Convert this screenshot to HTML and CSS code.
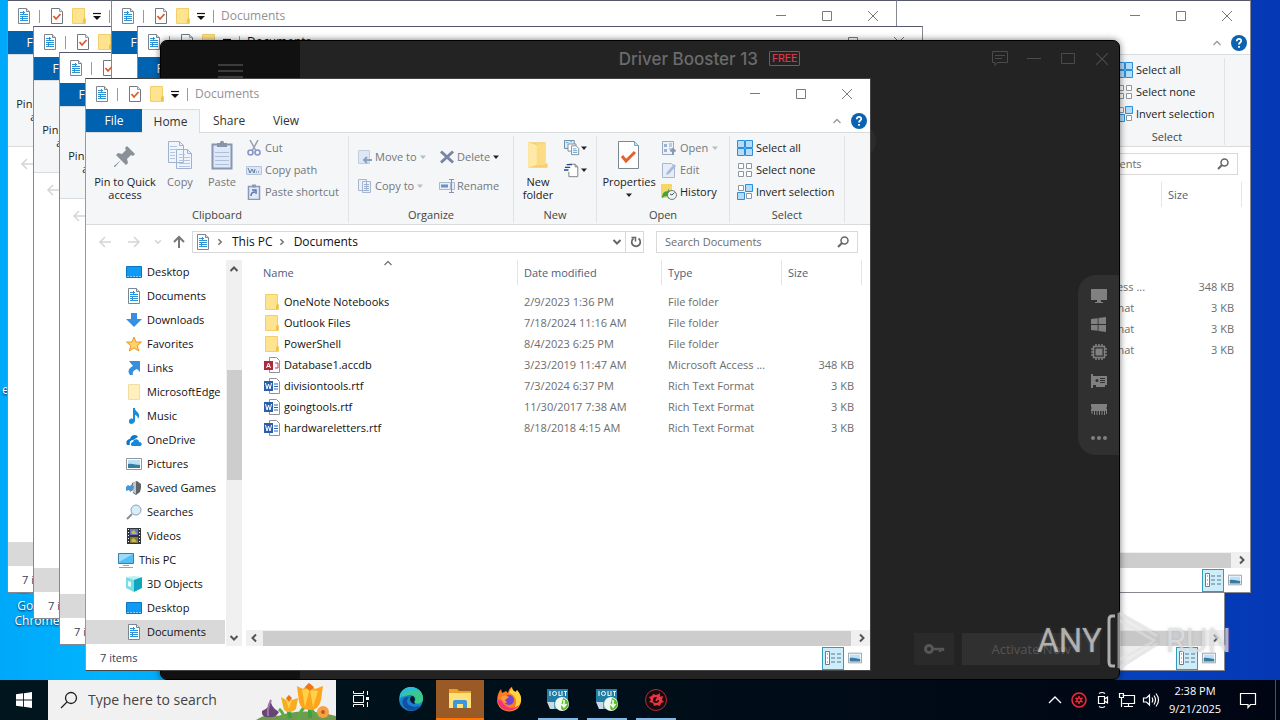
FILE: index.html
```html
<!DOCTYPE html>
<html lang="en">
<head>
<meta charset="utf-8">
<title>Desktop</title>
<link rel="stylesheet" href="styles.css">
</head>
<body>
<svg class="sprite" aria-hidden="true">
  <symbol id="doc" viewBox="0 0 16 16"><path d="M2.500.500h8l3 3v12h-11z" fill="#fff" stroke="#7d8690"/><path d="M10.500.500v3h3" fill="#dde" stroke="#7d8690"/><path d="M4 4.500h5M4 6.500h8M4 8.500h8M4 10.500h8M4 12.500h8" stroke="#2b93d6"/><path d="M7.500 3v4M6.500 9v4" stroke="#2b93d6"/></symbol>
  <symbol id="check" viewBox="0 0 16 16"><path d="M2.500.500h8l3 3v12h-11z" fill="#fff" stroke="#6f7780"/><path d="M10.500.500v3h3" fill="#d6e8f5" stroke="#7aa7c7"/><path d="M4.500 8l2.500 3 4.500-5" fill="none" stroke="#e0572b" stroke-width="1.800"/></symbol>
  <symbol id="folder" viewBox="0 0 16 16"><path d="M1.500.500h12v10h1v5h-13z" fill="#ffe48f" stroke="#f3cf6c"/><path d="M12 15v-3l1-2h1v5z" fill="#ecc14e"/></symbol>
  <symbol id="paleFolder" viewBox="0 0 16 16"><path d="M2.500.500h11v15h-11z" fill="#fff0bd" stroke="#f0dda0"/></symbol>
  <symbol id="custom" viewBox="0 0 10 10"><path d="M1 2.500h8" stroke="#111" stroke-width="1.200"/><path d="M1 5h8L5 9z" fill="#111"/></symbol>
  <symbol id="min" viewBox="0 0 12 12"><path d="M1 5.500h10" stroke="currentColor"/></symbol>
  <symbol id="max" viewBox="0 0 12 12"><path d="M1.500 1.500h9v9h-9z" fill="none" stroke="currentColor"/></symbol>
  <symbol id="close" viewBox="0 0 12 12"><path d="M1 1l10 10M11 1L1 11" stroke="currentColor"/></symbol>
  <symbol id="up" viewBox="0 0 10 10"><path d="M1.500 7L5 3.500 8.500 7" fill="none" stroke="currentColor" stroke-width="1.300"/></symbol>
  <symbol id="upBold" viewBox="0 0 10 10"><path d="M1.500 7L5 3.500 8.500 7" fill="none" stroke="currentColor" stroke-width="2"/></symbol>
  <symbol id="down" viewBox="0 0 10 10"><path d="M1.500 3L5 6.500 8.500 3" fill="none" stroke="currentColor" stroke-width="2"/></symbol>
  <symbol id="left" viewBox="0 0 10 10"><path d="M7 1.500L3.500 5 7 8.500" fill="none" stroke="currentColor" stroke-width="2"/></symbol>
  <symbol id="right" viewBox="0 0 10 10"><path d="M3 1.500L6.500 5 3 8.500" fill="none" stroke="currentColor" stroke-width="2"/></symbol>
  <symbol id="caret" viewBox="0 0 8 8"><path d="M1 2.500h6L4 6z" fill="currentColor"/></symbol>
  <symbol id="back" viewBox="0 0 14 14"><path d="M13 7H2M7 2L2 7l5 5" fill="none" stroke="currentColor" stroke-width="1.500"/></symbol>
  <symbol id="forward" viewBox="0 0 14 14"><path d="M1 7h11M7 2l5 5-5 5" fill="none" stroke="currentColor" stroke-width="1.500"/></symbol>
  <symbol id="parent" viewBox="0 0 14 14"><path d="M7 13V2M2 7l5-5 5 5" fill="none" stroke="currentColor" stroke-width="2"/></symbol>
  <symbol id="help" viewBox="0 0 16 16"><circle cx="8" cy="8" r="8" fill="#0b62b0"/><path d="M5.800 6.200C5.800 3 10.400 3.300 10.200 6c-.1 1.500-2.200 1.600-2.200 3.500M8 11v1.800" fill="none" stroke="#fff" stroke-width="1.800"/></symbol>
  <symbol id="pin" viewBox="0 0 24 24"><path d="M14 2l8 8-2 2-2-1-4 4 1 4-2 2-5-5-6 7-1 0 0-1 7-6-5-5 2-2 4 1 4-4-1-2z" fill="#8a9097"/></symbol>
  <symbol id="copy" viewBox="0 0 26 30"><path d="M1.500 1.500h11l4 4v17h-15zM9.500 9.500h11l4 4v15h-15z" fill="#f0f4fb" stroke="#9fb2d2"/><path d="M12.500 1.500v4h4M20.500 9.500v4h4" fill="none" stroke="#9fb2d2"/><path d="M3 6.500h7M3 9.500h6M3 12.500h5M3 15.500h5M3 18.500h5M12 14.500h6M12 17.500h11M12 20.500h11M12 23.500h11M12 26.500h11" stroke="#b3c5e3"/></symbol>
  <symbol id="paste" viewBox="0 0 24 30"><path d="M2.500 4.500h19v24h-19z" fill="#dfe8f6" stroke="#8796b3" stroke-width="2"/><path d="M7 3h3c0-3 4-3 4 0h3v4H7z" fill="#8a94a8"/><path d="M5 12.500h14M5 16.500h14M5 20.500h14M5 24.500h14" stroke="#aebfdc"/></symbol>
  <symbol id="cut" viewBox="0 0 16 16"><path d="M4 0l6 11M12 0L6 11" stroke="#94a0b4" stroke-width="1.500"/><circle cx="4.500" cy="12.500" r="2.500" fill="none" stroke="#8595c7" stroke-width="1.600"/><circle cx="11.500" cy="12.500" r="2.500" fill="none" stroke="#8595c7" stroke-width="1.600"/></symbol>
  <symbol id="path" viewBox="0 0 16 16"><path d="M.500 4.500h15v8H.500z" fill="#dbe6f5" stroke="#b7c5dc"/><path d="M2 6l2 5 2-4 2 4 1-4M10 10h1M12 10h1" fill="none" stroke="#62789d"/></symbol>
  <symbol id="shortcut" viewBox="0 0 16 16"><path d="M2.500 2.500h11v13h-11z" fill="#e1eafa" stroke="#8a99b8" stroke-width="1.500"/><path d="M6 .500h4v3H6z" fill="#8a99b8"/><path d="M5 12c0-3 1-4 4-4M6 6h4v4" fill="none" stroke="#5877a8" stroke-width="1.500"/></symbol>
  <symbol id="moveTo" viewBox="0 0 16 16"><path d="M1.500 1.500h11v13h-11z" fill="#dfe7f4" stroke="#c0cce0"/><path d="M15 11H7M10 8l-3 3 3 3" fill="none" stroke="#8ba2c7" stroke-width="2"/></symbol>
  <symbol id="copyTo" viewBox="0 0 16 16"><path d="M1.500 1.500h8v11h-8zM5.500 3.500h8v11h-8z" fill="#ecf1f9" stroke="#a7b7d0"/><path d="M7 6.500h5M7 8.500h5M7 10.500h5M7 12.500h5" stroke="#9db0d0"/></symbol>
  <symbol id="delete" viewBox="0 0 16 16"><path d="M2 2.500l12 11M14 2.500l-12 11" stroke="#7586a6" stroke-width="3"/></symbol>
  <symbol id="rename" viewBox="0 0 16 16"><path d="M.500 4.500h11v7H.500zM12 4.500h3.500v7H12" fill="#e8eff9" stroke="#a9b9d3"/><path d="M2 8h7" stroke="#6f8fc2" stroke-width="3"/><path d="M10 1.500h5M12.500 1.500v13M10 14.500h5" stroke="#8493ac"/></symbol>
  <symbol id="bigFolder" viewBox="0 0 22 28"><path d="M2 2h16v20h2v4H2z" fill="#f4cf6a"/><path d="M2 2l8 3v18l-8 3z" fill="#ffe9a6"/><path d="M10 3h8v20l-8 1z" fill="#fbdc85"/></symbol>
  <symbol id="newItem" viewBox="0 0 18 18"><path d="M.500.500h11v9H.500z" fill="#d9effb" stroke="#557e9b"/><path d="M4.500 4.500h9v8h-9z" fill="#fff" stroke="#7b8792"/><path d="M8.500 6.500h5l3 3v7h-8z" fill="#fff" stroke="#7b8792"/><path d="M2 3h3M7 2h2M10 10h4M10 12h5M10 14h5" stroke="#58a4cf"/></symbol>
  <symbol id="easy" viewBox="0 0 18 18"><path d="M5.500 2.500h7l3 3v11h-10V11" fill="#fff" stroke="#6f7780"/><path d="M12.500 2.500v3h3" fill="none" stroke="#6f7780"/><path d="M3 3h6M1 6h6M0 9h5" stroke="#1d4f8b" stroke-width="1.500"/></symbol>
  <symbol id="props" viewBox="0 0 24 30"><path d="M1.500 1.500h16l4 4v23h-20z" fill="#fff" stroke="#7b8792"/><path d="M17.500 1.500v4h4" fill="#bfe3fa" stroke="#67a8d2"/><path d="M5 16l4 5 9-9" fill="none" stroke="#e4602f" stroke-width="3"/></symbol>
  <symbol id="open" viewBox="0 0 16 16"><path d="M1.500 1.500h11v13h-11z" fill="#eff3f9" stroke="#9baabf"/><path d="M3 4h3v3H3zM3 9h3v3H3z" fill="#9db1d0"/><path d="M8 4h3M8 6h3M8 9h3" stroke="#8da1c2"/><path d="M12 15V9M9.500 11.500L12 9l2.500 2.500" fill="none" stroke="#8a98b1" stroke-width="2"/></symbol>
  <symbol id="edit" viewBox="0 0 16 16"><path d="M1.500 1.500h9l3 3v11h-12z" fill="#e6edf8" stroke="#a8b7ce"/><path d="M5 13l1-3 7-8 2 2-7 8z" fill="#aabbd6"/></symbol>
  <symbol id="history" viewBox="0 0 16 16"><path d="M0 0h11v14H0z" fill="#f8d568"/><path d="M1 14q0-7 6-7V5l5 5-5 5v-3q-4 0-6 2z" fill="#39a53f"/><circle cx="11" cy="11" r="4.500" fill="#eef2f2" stroke="#707b7d"/><path d="M11 11l2.500-2.500M11 11l-2-1" fill="none" stroke="#4b5557"/></symbol>
  <symbol id="selAll" viewBox="0 0 16 16"><path d="M.500.500h7v7h-7zM8.500.500h7v7h-7zM.500 8.500h7v7h-7zM8.500 8.500h7v7h-7z" fill="#b5dcf8" stroke="#2b8fdc"/></symbol>
  <symbol id="selNone" viewBox="0 0 16 16"><path d="M1.500 1.500h5v5h-5zM9.500 1.500h5v5h-5zM1.500 9.500h5v5h-5zM9.500 9.500h5v5h-5z" fill="#fff" stroke="#8f979e"/></symbol>
  <symbol id="selInv" viewBox="0 0 16 16"><path d="M1.500 1.500h5v5h-5zM9.500 9.500h5v5h-5z" fill="#fff" stroke="#8f979e"/><path d="M8.500.500h7v7h-7zM.500 8.500h7v7h-7z" fill="#b5dcf8" stroke="#2b8fdc"/></symbol>
  <symbol id="refresh" viewBox="0 0 14 14"><path d="M9.500 3.500a4.300 4.300 0 1 1-5 0" fill="none" stroke="currentColor" stroke-width="1.700"/><path d="M2.500 2.500h4v4" fill="none" stroke="currentColor" stroke-width="1.500"/></symbol>
  <symbol id="lens" viewBox="0 0 14 14"><circle cx="8.500" cy="5.500" r="3.500" fill="none" stroke="currentColor" stroke-width="1.500"/><path d="M6 8l-4 4" stroke="currentColor" stroke-width="2"/></symbol>
  <symbol id="desktop" viewBox="0 0 16 16"><path d="M.500 2.500h15v11H.500z" fill="#109af2" stroke="#0877c8"/><path d="M1 12.500h14" stroke="#7fcaff" stroke-dasharray="2 1"/></symbol>
  <symbol id="downloads" viewBox="0 0 16 16"><path d="M5 1h6v6h5l-8 8-8-8h5z" fill="#3590e4"/></symbol>
  <symbol id="star" viewBox="0 0 16 16"><path d="M8 1l2 5h5.500l-4.300 3.500 1.600 5.500L8 12l-4.800 3 1.600-5.500L.500 6H6z" fill="#ffd267" stroke="#ea962e"/></symbol>
  <symbol id="links" viewBox="0 0 16 16"><path d="M3 1h11v11l-3-3c-3 1-5 3-4 6H4c-3-4-1-7 3-9z" fill="#378fdb"/></symbol>
  <symbol id="music" viewBox="0 0 16 16"><path d="M7 0h2c0 4 5 4 4 9l-1 2c0-3-2-4-3-4v6c-1 4-7 4-6 0 0-2 2-3 4-2z" fill="#168edc"/></symbol>
  <symbol id="cloud" viewBox="0 0 16 16"><path d="M1 13c-2-4 1-6 3-6 1-5 7-5 8-2L7 8c-3 0-4 3-3 5z" fill="#0b78cf"/><path d="M6 14c-2-1-1-4 1-4 1-4 6-3 6 0 4 0 3 4 1 4z" fill="#1687df"/></symbol>
  <symbol id="pictures" viewBox="0 0 16 16"><path d="M.500 2.500h15v11H.500z" fill="#fff" stroke="#8f989f"/><path d="M2 4h12v8H2z" fill="#bce0f6"/><path d="M2 8c4-1 8 1 12 1v3H2z" fill="#377ca1"/></symbol>
  <symbol id="games" viewBox="0 0 16 16"><path d="M6 3l5-2 4 3v4l-1 4-4 3-3-2z" fill="#5f6368"/><path d="M7 3l3-2v13l-3-2z" fill="#c3c6c8"/><path d="M0 7l2-2 2 1 2-2 2 3-1 3-3 2-1-2-3 1z" fill="#4795d2"/></symbol>
  <symbol id="searches" viewBox="0 0 16 16"><circle cx="10" cy="6" r="5" fill="#d7edfa" stroke="#8ea2b3"/><path d="M6 10l-5 5" stroke="#8a8f94" stroke-width="2"/></symbol>
  <symbol id="videos" viewBox="0 0 16 16"><path d="M1 0h14v16H1z" fill="#30363c"/><path d="M4 1h8v6H4z" fill="#6679ba"/><path d="M4 9h8v6H4z" fill="#83793e"/><path d="M5 4l3-2 3 4H6M5 12l3-2 3 4H6" fill="#d2b73e"/><path d="M2.500 1v15M13.500 1v15" stroke="#fff" stroke-dasharray="1 2"/></symbol>
  <symbol id="pc" viewBox="0 0 16 16"><path d="M.500 1.500h15v10H.500z" fill="#54bdf2" stroke="#397fa8"/><path d="M1 2h14L1 10z" fill="#9bdcfa"/><path d="M5 13.500h6M1 15.500h14" stroke="#93a4ae"/></symbol>
  <symbol id="objects" viewBox="0 0 16 16"><path d="M8 3L0 1v11l8 4z" fill="#7adde4"/><path d="M8 3l8-2v11l-8 4z" fill="#10a4bd"/><path d="M0 1l8-1 8 1-8 3z" fill="#bdf2f3"/><path d="M2 5l3 1v5l-3-1z" fill="#e8ffff"/></symbol>
  <symbol id="access" viewBox="0 0 16 16"><path d="M5.500.500h7l3 3v12h-10z" fill="#fff" stroke="#8e9499"/><path d="M11 6h3v5h-3" fill="none" stroke="#c43b51"/><path d="M0 4h9v9H0z" fill="#b1283e"/><path d="M2.500 11l2-5 2 5M3 9.500h3" fill="none" stroke="#fff"/></symbol>
  <symbol id="word" viewBox="0 0 16 16"><path d="M5.500.500h7l3 3v12h-10z" fill="#fff" stroke="#8e9499"/><path d="M10 6h4M10 8.500h4M10 11h4" stroke="#2b66b4"/><path d="M0 3h9v10H0z" fill="#2a5faa"/><path d="M1.500 5l1.500 6 1.500-5L6 11l1.500-6" fill="none" stroke="#fff"/></symbol>
  <symbol id="details" viewBox="0 0 18 16"><path d="M1.500 1.500h4v13h-4z" fill="#fff" stroke="#817474"/><path d="M3 4h1M3 8h1M3 12h1M7 4h4M13 4h4M7 8h4M13 8h4M7 12h4M13 12h4" stroke="#60728a" stroke-width="1.200"/></symbol>
  <symbol id="win" viewBox="0 0 18 18"><path d="M0 2.500L8 1.400V8.500H0zM9 1.300L18 0v8.500H9zM0 9.500h8v7.100l-8-1.100zM9 9.500h9V18l-9-1.300z" fill="currentColor"/></symbol>
</svg>

<div class="screen">
  <main class="desktop">
    <div class="shortcut-label cut-label">e</div>
    <div class="shortcut-label chrome-label"><i class="chrome-foot"></i>Google Chrome</div>

    <div class="slot w-a show-left"></div>
    <div class="slot w-b show-left"></div>
    <div class="slot w-c show-left"></div>
    <div class="slot w-d show-foot"></div>
    <div class="slot w-e show-right"></div>
    <div class="slot w-f show-head"></div>
    <div class="slot w-g show-head is-active"></div>

    <section class="booster" aria-label="Driver Booster">
      <aside class="booster-side"><button class="burger" aria-label="Menu"><i></i><i></i><i></i></button></aside>
      <div class="booster-main">
        <i class="orb"></i>
        <header class="booster-head">
          <h1>Driver Booster 13 <span>FREE</span></h1>
          <div class="booster-buttons">
            <button aria-label="Feedback"><svg width="18" height="18" viewBox="0 0 18 18"><path d="M1.500 1.500h15v11h-10l-2.500 3v-3H1.500zM4 5.500h10M4 8.500h7" fill="none" stroke="currentColor"/></svg></button>
            <button aria-label="Minimize"><svg width="16" height="16" viewBox="0 0 16 16"><path d="M1 7.500h14" stroke="currentColor"/></svg></button>
            <button aria-label="Maximize"><svg width="16" height="16" viewBox="0 0 16 16"><path d="M1.500 2.500h13v10h-13z" fill="none" stroke="currentColor"/></svg></button>
            <button aria-label="Close"><svg width="14" height="14"><use href="#close"/></svg></button>
          </div>
        </header>
        <div class="booster-body">
          <nav class="tools">
            <button aria-label="Display"><svg width="16" height="16" viewBox="0 0 16 16"><path d="M0 1h16v11H0zM6 12h4v2h2v1H4v-1h2z" fill="currentColor"/></svg></button>
            <button aria-label="System"><svg width="15" height="15"><use href="#win"/></svg></button>
            <button aria-label="Processor"><svg width="16" height="16" viewBox="0 0 16 16"><path d="M2.500 2.500h11v11h-11z" fill="none" stroke="currentColor" stroke-width="1.500"/><path d="M4.500 4.500h7v7h-7z" fill="currentColor"/><path d="M5 0v2M8 0v2M11 0v2M5 14v2M8 14v2M11 14v2M0 5h2M0 8h2M0 11h2M14 5h2M14 8h2M14 11h2" stroke="currentColor" stroke-width="1.500"/></svg></button>
            <button aria-label="Graphics"><svg width="16" height="16" viewBox="0 0 16 16"><path d="M0 1h2v14H0z" fill="currentColor"/><path d="M2 3h14v9h-2v2H5v-2H2z" fill="currentColor"/><circle cx="6" cy="7.500" r="1.500" fill="#303030"/><path d="M9 5.500h5M9 7.500h5M9 9.500h5" stroke="#303030"/></svg></button>
            <button aria-label="Memory"><svg width="16" height="16" viewBox="0 0 16 16"><path d="M0 3h16v3l-1 1 1 1v2H0V8l1-1-1-1z" fill="currentColor"/><path d="M1 10v3M3.500 10v4M6 10v4M8.500 10v4M11 10v4M13.500 10v4M15.500 10v3" stroke="currentColor"/></svg></button>
            <button aria-label="More"><svg width="16" height="16" viewBox="0 0 16 16"><circle cx="2" cy="8" r="2" fill="currentColor"/><circle cx="8" cy="8" r="2" fill="currentColor"/><circle cx="14" cy="8" r="2" fill="currentColor"/></svg></button>
          </nav>
        </div>
        <footer class="booster-foot">
          <button class="key" aria-label="License key"><svg width="22" height="14" viewBox="0 0 22 14"><circle cx="6" cy="7" r="3.500" fill="none" stroke="currentColor" stroke-width="3"/><path d="M9 7h12M17 7v3M20 7v2" stroke="currentColor" stroke-width="2.500"/></svg></button>
          <button class="activate">Activate Now</button>
        </footer>
      </div>
    </section>

    <div class="slot w-front"></div>
  </main>

  <div class="watermark" aria-label="ANY RUN">
    <span>ANY</span>
    <svg width="54" height="62" viewBox="0 0 54 62"><path d="M8 6H5Q2 6 2 10v42q0 4 3 4h3" fill="none" stroke="currentColor" stroke-width="3"/><path d="M12 1l41 23v10L12 60z" fill="#bbb" opacity=".35"/><path d="M12 3l38 23M12 10l36 21M12 3v55M12 50l34-18M12 58l38-24" fill="none" stroke="currentColor" stroke-width="3" stroke-linejoin="round" opacity=".75"/></svg>
    <span>RUN</span>
  </div>

  <footer class="taskbar">
    <button class="start" aria-label="Start"><svg width="16" height="16"><use href="#win"/></svg></button>
    <div class="task-search">
      <svg width="18" height="18" viewBox="0 0 18 18"><circle cx="11" cy="7" r="5.500" fill="none" stroke="#222" stroke-width="1.300"/><path d="M7 11l-6 6" stroke="#222" stroke-width="1.300"/></svg>
      <input type="text" placeholder="Type here to search" aria-label="Type here to search">
      <svg class="flowers" width="80" height="38" viewBox="0 0 80 38"><path d="M0 38q12-8 22-4 24-9 58 0v4z" fill="#6f9a50"/><path d="M34 36L32 24M54 36V20" stroke="#3f9f40" stroke-width="4"/><path d="M42 38q2-11 9-14M64 34q-7-2-9-8M28 36q-1-6-5-9" stroke="#58ad43" stroke-width="3" fill="none"/><path d="M25 15l5 3 3-5 3 5 6-2-2 11q-6 6-12 1z" fill="#f7ad22"/><path d="M41 4l6 3 6-6 6 6 8-3-2 14q-2 10-11 10-9 0-11-8z" fill="#ffa51d"/><path d="M46 8l3 17 5-19M54 8l3 17 5-16M30 18l3 9 3-10z" fill="#ffd24a"/><path d="M49 5l4-4 5 4-4 4zM30 16l3-3 3 3-3 4z" fill="#ec761e"/><path d="M15 17q-1 8 8 13-3 6-9 5-9 1-8-6 8-3 9-12z" fill="#684477"/><path d="M15 18q-4 8-3 16" stroke="#9d77a6" stroke-width="2" fill="none"/><circle cx="67" cy="30" r="6" fill="#f4a343"/><circle cx="67" cy="30" r="2" fill="#c95420"/></svg>
    </div>
    <nav class="apps">
      <button aria-label="Task view"><svg width="18" height="16" viewBox="0 0 18 16"><path d="M1.500 4.500h10v7h-10zM1.500 0v2.500h10V0M1.500 16v-2.500h10V16M15.500 0v4M15.500 11v5" fill="none" stroke="#fff"/><path d="M14 6h3v3h-3z" fill="#fff"/></svg></button>
      <button aria-label="Edge"><svg width="26" height="26" viewBox="0 0 26 26"><circle cx="13" cy="13" r="12" fill="#1682ce"/><path d="M2 9C6-4 26 0 25 13c0 5-7 6-9 3 3-2 1-7-4-7C7 9 3 13 2 9z" fill="#3bc98a"/><path d="M2 9C6 0 16-1 22 5 13 3 5 7 2 13z" fill="#29bddc"/><path d="M11 11c-5 5 0 12 11 9-4 6-14 6-17-1-2-5 2-9 6-8z" fill="#1450a0"/><path d="M14 10c-3 1-3 7 3 8-1-2-1-3 0-4 0-2-1-4-3-4z" fill="#071b2b"/></svg></button>
      <button class="current" aria-label="File Explorer"><svg width="24" height="22" viewBox="0 0 24 22"><path d="M1 1h8l2 2h12v17H1z" fill="#e9a427"/><path d="M1 5h22v15H1z" fill="#ffe07a"/><path d="M5 20v-6q0-2 2-2h10q2 0 2 2v6h-4v-4H9v4z" fill="#3b98df"/></svg></button>
      <button aria-label="Firefox"><svg width="26" height="26" viewBox="0 0 26 26"><path d="M3 6l2-3 1 4 4-2 2 2q1-5 4-6 0 4 4 5l1-2q5 6 4 11c-1 14-22 14-24 0Q1 10 3 6z" fill="#ff7b22"/><path d="M16 1q0 4 4 5l1-2q5 6 4 11c-1 4-4 8-8 9 6-7 3-15-4-17z" fill="#ffd33d"/><path d="M1 13c2 14 18 14 22 6-7 6-15 2-17-4z" fill="#ee347f"/><circle cx="13" cy="14" r="5" fill="#7544d7"/><path d="M5 11q4-3 8 0l-4 3 2 3q-5 0-6-6z" fill="#ff983e"/></svg></button>
      <button class="running" aria-label="IObit installer"><svg width="24" height="24" viewBox="0 0 24 24"><path d="M1 1h21v13H1z" fill="#237ea5"/><path d="M4 3v5M16 3v5M13 3v5M13 7.500h2M18 3.500h3M19.500 3v5" stroke="#fff"/><circle cx="8.500" cy="5.500" r="2" fill="none" stroke="#fff"/><path d="M1 14h17l3 7H4z" fill="#c9dce6"/><path d="M8 14h6v7H8z" fill="#5f9cb8"/><circle cx="16" cy="16" r="7" fill="#eff8ed"/><path d="M17 10c8 2 7 12-1 12-2-3 0-7 1-12z" fill="#58bf2b"/><path d="M18 12v6M15.500 16l2.500 3 2.500-3" stroke="#fff" stroke-width="1.500" fill="none"/></svg></button>
      <button class="running" aria-label="IObit setup"><svg width="24" height="24" viewBox="0 0 24 24"><path d="M1 1h21v13H1z" fill="#237ea5"/><path d="M4 3v5M16 3v5M13 3v5M13 7.500h2M18 3.500h3M19.500 3v5" stroke="#fff"/><circle cx="8.500" cy="5.500" r="2" fill="none" stroke="#fff"/><path d="M1 14h17l3 7H4z" fill="#c9dce6"/><path d="M8 14h6v7H8z" fill="#5f9cb8"/><circle cx="16" cy="16" r="7" fill="#eff8ed"/><path d="M17 10c8 2 7 12-1 12-2-3 0-7 1-12z" fill="#58bf2b"/><path d="M18 12v6M15.500 16l2.500 3 2.500-3" stroke="#fff" stroke-width="1.500" fill="none"/></svg></button>
      <button class="running" aria-label="Driver Booster"><svg width="24" height="24" viewBox="0 0 24 24"><circle cx="12" cy="12" r="10.500" fill="#170b0f" stroke="#bd2934"/><path d="M5 9l3-1 1-2 3 1 3-1v3l4-1-1 4 2 2-3 1-1 3-3-1-3 1-1-3-4-1 2-2z" fill="#ee3341"/><circle cx="12" cy="12" r="3" fill="#170b0f"/><path d="M12 13l3-5v4" stroke="#ee3341" stroke-width="2" fill="none"/></svg></button>
    </nav>
    <div class="tray">
      <button aria-label="Hidden icons"><svg width="14" height="14" viewBox="0 0 14 14"><path d="M1 10l6-6 6 6" fill="none" stroke="#fff" stroke-width="1.300"/></svg></button>
      <button aria-label="Driver Booster"><svg width="16" height="16" viewBox="0 0 16 16"><circle cx="8" cy="8" r="7" fill="#1a070b" stroke="#f02c3e" stroke-width="1.500"/><path d="M8 4v8M4.500 6l7 4M11.500 6l-7 4" stroke="#f02c3e" stroke-width="1.500"/><circle cx="8" cy="8" r="2.500" fill="#f02c3e"/><circle cx="8" cy="8" r="1.300" fill="#1a070b"/></svg></button>
      <button aria-label="Meet now"><svg width="16" height="18" viewBox="0 0 16 18"><path d="M3.500 5.500h6v7h-6zM9.500 8l3-2v6l-3-2M4 2.500q3-2 6 0M4 15.500q3 2 6 0" fill="none" stroke="#fff" stroke-width="1.200"/></svg></button>
      <button aria-label="Network"><svg width="18" height="16" viewBox="0 0 18 16"><path d="M4.500 3.500h12v8H4.500M10.500 12v2M6 14.500h9M1.500 1.500h4v4h-4zM3.500 6v9" fill="none" stroke="#fff" stroke-width="1.200"/></svg></button>
      <button aria-label="Volume"><svg width="18" height="16" viewBox="0 0 18 16"><path d="M1.500 6h3l3-3v10l-3-3h-3zM10 5.500q1.500 2.500 0 5M12 3.500q3 4.500 0 9M14 1.500q5 6.500 0 13" fill="none" stroke="#fff" stroke-width="1.200"/></svg></button>
      <time class="clock"><span>2:38 PM</span><span>9/21/2025</span></time>
      <button class="notes" aria-label="Notifications"><svg width="18" height="18" viewBox="0 0 18 18"><path d="M1.500 2.500h15v11h-5l-2.500 3v-3h-7.500z" fill="none" stroke="#fff" stroke-width="1.200"/></svg></button>
      <i class="peek"></i>
    </div>
  </footer>
</div>

<template id="explorer">
  <section class="explorer">
    <header class="title">
      <svg width="16" height="16"><use href="#doc"/></svg><i class="bar"></i>
      <svg width="16" height="16"><use href="#check"/></svg>
      <svg width="16" height="16"><use href="#folder"/></svg>
      <svg width="10" height="10"><use href="#custom"/></svg><i class="bar"></i>
      <h2>Documents</h2>
      <div class="controls">
        <button aria-label="Minimize"><svg width="12" height="12"><use href="#min"/></svg></button>
        <button aria-label="Maximize"><svg width="12" height="12"><use href="#max"/></svg></button>
        <button aria-label="Close"><svg width="12" height="12"><use href="#close"/></svg></button>
      </div>
    </header>
    <nav class="tabs">
      <button class="file">File</button><button class="home">Home</button><button class="share">Share</button><button>View</button>
      <span class="tabs-end"><svg width="10" height="10"><use href="#up"/></svg><svg width="16" height="16"><use href="#help"/></svg></span>
    </nav>
    <div class="ribbon">
      <div class="group g-clip">
        <div class="tools-row">
          <button class="big b-pin"><svg width="26" height="30" viewBox="0 0 26 30"><use href="#pin" x="1" y="4" width="24" height="24"/></svg><span>Pin to Quick access</span></button>
          <button class="big b-narrow off"><svg width="26" height="30"><use href="#copy"/></svg><span>Copy</span></button>
          <button class="big b-narrow off"><svg width="24" height="30"><use href="#paste"/></svg><span>Paste</span></button>
          <div class="stack">
            <button class="off"><svg width="16" height="16"><use href="#cut"/></svg>Cut</button>
            <button class="off"><svg width="16" height="16"><use href="#path"/></svg>Copy path</button>
            <button class="off"><svg width="16" height="16"><use href="#shortcut"/></svg>Paste shortcut</button>
          </div>
        </div>
        <div class="group-name">Clipboard</div>
      </div>
      <div class="group g-org">
        <div class="tools-row">
          <div class="stack wide">
            <button class="off"><svg width="16" height="16"><use href="#moveTo"/></svg>Move to<svg width="8" height="8"><use href="#caret"/></svg></button>
            <button class="off"><svg width="16" height="16"><use href="#copyTo"/></svg>Copy to<svg width="8" height="8"><use href="#caret"/></svg></button>
          </div>
          <div class="stack wide">
            <button class="off"><svg width="16" height="16"><use href="#delete"/></svg>Delete<svg class="dark" width="8" height="8"><use href="#caret"/></svg></button>
            <button class="off"><svg width="16" height="16"><use href="#rename"/></svg>Rename</button>
          </div>
        </div>
        <div class="group-name">Organize</div>
      </div>
      <div class="group g-new">
        <div class="tools-row">
          <button class="big b-narrow"><svg width="24" height="30"><use href="#bigFolder"/></svg><span>New folder</span></button>
          <div class="stack tight">
            <button aria-label="New item"><svg width="16" height="16"><use href="#newItem"/></svg><svg width="8" height="8"><use href="#caret"/></svg></button>
            <button aria-label="Easy access"><svg width="16" height="16"><use href="#easy"/></svg><svg width="8" height="8"><use href="#caret"/></svg></button>
          </div>
        </div>
        <div class="group-name">New</div>
      </div>
      <div class="group g-open">
        <div class="tools-row">
          <button class="big b-props"><svg width="24" height="30"><use href="#props"/></svg><span>Properties</span><svg width="8" height="8"><use href="#caret"/></svg></button>
          <div class="stack">
            <button class="off"><svg width="16" height="16"><use href="#open"/></svg>Open<svg width="8" height="8"><use href="#caret"/></svg></button>
            <button class="off"><svg width="16" height="16"><use href="#edit"/></svg>Edit</button>
            <button><svg width="16" height="16"><use href="#history"/></svg>History</button>
          </div>
        </div>
        <div class="group-name">Open</div>
      </div>
      <div class="group g-sel">
        <div class="tools-row">
          <div class="stack">
            <button><svg width="16" height="16"><use href="#selAll"/></svg>Select all</button>
            <button><svg width="16" height="16"><use href="#selNone"/></svg>Select none</button>
            <button><svg width="16" height="16"><use href="#selInv"/></svg>Invert selection</button>
          </div>
        </div>
        <div class="group-name">Select</div>
      </div>
    </div>
    <div class="address">
      <div class="moves">
        <svg width="14" height="14"><use href="#back"/></svg>
        <svg width="14" height="14"><use href="#forward"/></svg>
        <svg width="8" height="8"><use href="#down"/></svg>
        <svg class="parent" width="14" height="14"><use href="#parent"/></svg>
      </div>
      <div class="crumbs">
        <svg width="16" height="16"><use href="#doc"/></svg>
        <svg width="8" height="8"><use href="#right"/></svg><a href="#">This PC</a>
        <svg width="8" height="8"><use href="#right"/></svg><a href="#">Documents</a>
        <span class="crumb-end"><svg width="10" height="10"><use href="#down"/></svg><i></i><svg width="14" height="14"><use href="#refresh"/></svg></span>
      </div>
      <div class="find"><input type="text" placeholder="Search Documents" aria-label="Search Documents"><svg width="14" height="14"><use href="#lens"/></svg></div>
    </div>
    <div class="content">
      <nav class="tree">
        <a href="#"><svg width="16" height="16"><use href="#desktop"/></svg>Desktop</a>
        <a href="#"><svg width="16" height="16"><use href="#doc"/></svg>Documents</a>
        <a href="#"><svg width="16" height="16"><use href="#downloads"/></svg>Downloads</a>
        <a href="#"><svg width="16" height="16"><use href="#star"/></svg>Favorites</a>
        <a href="#"><svg width="16" height="16"><use href="#links"/></svg>Links</a>
        <a href="#"><svg width="16" height="16"><use href="#paleFolder"/></svg>MicrosoftEdge</a>
        <a href="#"><svg width="16" height="16"><use href="#music"/></svg>Music</a>
        <a href="#"><svg width="16" height="16"><use href="#cloud"/></svg>OneDrive</a>
        <a href="#"><svg width="16" height="16"><use href="#pictures"/></svg>Pictures</a>
        <a href="#"><svg width="16" height="16"><use href="#games"/></svg>Saved Games</a>
        <a href="#"><svg width="16" height="16"><use href="#searches"/></svg>Searches</a>
        <a href="#"><svg width="16" height="16"><use href="#videos"/></svg>Videos</a>
        <a href="#" class="root"><svg width="16" height="16"><use href="#pc"/></svg>This PC</a>
        <a href="#"><svg width="16" height="16"><use href="#objects"/></svg>3D Objects</a>
        <a href="#"><svg width="16" height="16"><use href="#desktop"/></svg>Desktop</a>
        <a href="#" class="picked"><svg width="16" height="16"><use href="#doc"/></svg><span>Documents</span></a>
      </nav>
      <div class="vscroll"><svg width="10" height="10"><use href="#upBold"/></svg><div class="vtrack"><i></i></div><svg width="10" height="10"><use href="#down"/></svg></div>
      <div class="list">
        <table>
          <colgroup><col><col class="c-date"><col class="c-type"><col class="c-size"><col class="c-rest"></colgroup>
          <thead><tr><th>Name<svg class="sort" width="10" height="10"><use href="#up"/></svg></th><th>Date modified</th><th>Type</th><th>Size</th><th></th></tr></thead>
          <tbody>
            <tr><td><svg width="16" height="16"><use href="#folder"/></svg>OneNote Notebooks</td><td>2/9/2023 1:36 PM</td><td>File folder</td><td></td><td></td></tr>
            <tr><td><svg width="16" height="16"><use href="#folder"/></svg>Outlook Files</td><td>7/18/2024 11:16 AM</td><td>File folder</td><td></td><td></td></tr>
            <tr><td><svg width="16" height="16"><use href="#folder"/></svg>PowerShell</td><td>8/4/2023 6:25 PM</td><td>File folder</td><td></td><td></td></tr>
            <tr><td><svg width="16" height="16"><use href="#access"/></svg>Database1.accdb</td><td>3/23/2019 11:47 AM</td><td>Microsoft Access ...</td><td>348 KB</td><td></td></tr>
            <tr><td><svg width="16" height="16"><use href="#word"/></svg>divisiontools.rtf</td><td>7/3/2024 6:37 PM</td><td>Rich Text Format</td><td>3 KB</td><td></td></tr>
            <tr><td><svg width="16" height="16"><use href="#word"/></svg>goingtools.rtf</td><td>11/30/2017 7:38 AM</td><td>Rich Text Format</td><td>3 KB</td><td></td></tr>
            <tr><td><svg width="16" height="16"><use href="#word"/></svg>hardwareletters.rtf</td><td>8/18/2018 4:15 AM</td><td>Rich Text Format</td><td>3 KB</td><td></td></tr>
          </tbody>
        </table>
        <div class="hscroll"><svg width="10" height="10"><use href="#left"/></svg><i></i><svg width="10" height="10"><use href="#right"/></svg></div>
      </div>
    </div>
    <footer class="status"><span>7 items</span>
      <button class="view on" aria-label="Details view"><svg width="18" height="16"><use href="#details"/></svg></button>
      <button class="view" aria-label="Large icons view"><svg width="14" height="14"><use href="#pictures"/></svg></button>
    </footer>
  </section>
</template>
<script src="script.js"></script>
</body>
</html>
```

FILE: styles.css
```css
* { box-sizing: border-box; }
body { margin: 0; font: 11px/16px "Open Sans", "Noto Sans", sans-serif; color: #111; }
button { border: 0; padding: 0; background: none; font: inherit; color: inherit; display: flex; align-items: center; justify-content: center; }
input { border: 0; padding: 0; background: none; font: inherit; min-width: 0; outline: none; }
a { color: inherit; text-decoration: none; }
h1, h2 { margin: 0; font: inherit; }
svg { flex: none; display: block; }
.sprite { position: absolute; width: 0; height: 0; }

.screen { position: relative; height: 100vh; display: flex; flex-direction: column; overflow: hidden; }
.desktop { position: relative; flex: 1; overflow: hidden; background: linear-gradient(90deg, #00a8fa 0%, #00b4ff 8%, #0a5cd0 60%, #053bb8 95%, #0638b4 100%); }
.shortcut-label { position: absolute; color: #fff; text-align: center; font-size: 12px; line-height: 15px; text-shadow: 0 1px 2px #024; }
.cut-label { left: 2px; top: 382px; }
.chrome-label { left: 8px; top: 586px; width: 58px; }
.chrome-foot { display: block; width: 22px; height: 8px; margin: 0 0 4px 4px; border-radius: 0 0 12px 12px; background: linear-gradient(90deg, #db4437 50%, #0f9d58 50%); }

/* stacked windows */
.slot { position: absolute; width: 786px; height: 593px; display: flex; }
.w-a { left: 7px; top: 0; }
.w-b { left: 33px; top: 26px; }
.w-c { left: 59px; top: 52px; }
.w-d { left: 439px; top: 78px; }
.w-e { left: 465px; top: 0; }
.w-f { left: 111px; top: 0; }
.w-g { left: 137px; top: 26px; }
.w-front { left: 85px; top: 78px; }

.explorer { flex: 1; min-width: 0; display: flex; flex-direction: column; background: #fff; border: 1px solid #85898f; border-top-color: #55586a; overflow: hidden; }
.w-front .explorer { border-color: #454545; border-left-color: #999; }

/* parts of the windows behind that stay unpainted */
.show-left :is(h2, .controls, .home, .share, .share + button, .tabs-end, .group, .crumbs, .find, .tree a:not(.picked), .picked > *, .vscroll, .list, .view) { visibility: hidden; }
.show-left .b-pin { visibility: visible; }
.show-right :is(.title > svg, .title > .bar, h2, .tabs button, .group:not(.g-sel), .moves, .crumbs, .tree, .vscroll, th:nth-child(-n+2), td:nth-child(-n+2), .status span) { visibility: hidden; }
.show-foot :is(.title, .tabs, .ribbon, .address, .tree, .vscroll, table, .status span) { visibility: hidden; }
.show-head :is(.home, .share, .share + button, .tabs-end, .ribbon, .address, .content, .status) { visibility: hidden; }
.show-head .tabs { border-color: transparent; }

.title { display: flex; align-items: center; height: 30px; padding-left: 8px; }
.title .bar { width: 1px; height: 13px; background: #9a9a9a; margin: 0 8px 0 7px; }
.title svg + svg { margin-left: 6px; }
.title svg + svg + svg { margin-left: 5px; }
.title .bar + svg { margin-left: 1px; }
.title h2 { color: #929292; font-size: 12px; margin-left: -1px; }
.is-active .title h2 { color: #111; }
.controls { display: flex; align-self: stretch; margin-left: auto; color: #7b7b7b; }
.controls button { width: 46px; }

.tabs { display: flex; height: 24px; border-bottom: 1px solid #dadbdc; }
.tabs button { width: 56px; color: #333; font-size: 12px; }
.tabs button.share { width: 58px; }
.tabs button.file { background: #0063b1; color: #fff; }
.tabs button.home { width: 58px; margin-bottom: -1px; background: #f5f6f7; border: 1px solid #dadbdc; border-width: 1px 1px 0 0; }
.tabs-end { display: flex; align-items: center; gap: 9px; margin-left: auto; padding-right: 3px; color: #999; }

.ribbon { display: flex; height: 92px; background: #f5f6f7; border-bottom: 1px solid #dadbdc; padding: 3px 0 1px; color: #222; }
.group { display: flex; flex-direction: column; justify-content: space-between; border-right: 1px solid #e2e3e4; }
.g-clip { width: 263px; }
.g-org { width: 165px; }
.g-new { width: 83px; }
.g-open { width: 133px; }
.g-sel { width: 115px; }
.group-name { text-align: center; color: #444; }
.tools-row { display: flex; align-items: flex-start; white-space: nowrap; }
.big { flex-direction: column; justify-content: flex-start; padding-top: 4px; }
.big span { line-height: 13px; margin-top: 5px; white-space: normal; }
.b-pin { width: 78px; }
.b-narrow { width: 42px; }
.b-pin + .b-narrow { margin: 0 0 0 -5px; }
.b-pin + .b-narrow + .b-narrow { margin-right: 3px; }
.b-props { width: 64px; }
.big > svg + span + svg { margin-top: 3px; }
.off { color: #73777c; }
.dark { color: #222; }
.stack { display: flex; flex-direction: column; padding-top: 1px; }
.stack button { height: 22px; gap: 3px; justify-content: flex-start; }
.stack.tight button { gap: 0; }
.off svg:last-child:not(:first-child):not(.dark) { color: #b9bcc0; }
.stack.wide { width: 84px; padding: 6px 0 0 8px; }
.stack.wide button { height: 29px; gap: 2px; }
.g-new .b-narrow { margin: 0 5px 0 3px; }
.g-open .stack { padding-left: 0; }
.g-sel .stack { padding-left: 7px; }

.address { display: flex; align-items: center; height: 35px; padding: 0 12px 1px; }
.moves { display: flex; align-items: center; gap: 15px; width: 94px; color: #d5d5d5; }
.moves svg:nth-child(3) { margin: 0 -5px 0 -2px; }
.moves .parent { color: #777; }
.crumbs { flex: 1; display: flex; align-items: center; height: 22px; border: 1px solid #d9d9d9; padding-left: 2px; color: #111; font-size: 12px; }
.crumbs > svg + svg { margin-left: 5px; }
.crumbs > a { margin: 0 5px 0 8px; }
.crumbs > svg { color: #777; }
.crumb-end { display: flex; align-items: center; align-self: stretch; gap: 3px; margin-left: auto; color: #666; }
.crumb-end i { width: 1px; align-self: stretch; background: #d9d9d9; }
.find { display: flex; align-items: center; width: 202px; height: 22px; margin-left: 12px; padding: 0 7px 0 8px; border: 1px solid #d9d9d9; color: #666; }
.find input { flex: 1; color: #666; }
.find input::placeholder { color: #6d6d6d; opacity: 1; }

.content { flex: 1; display: flex; min-height: 0; }
.tree { width: 140px; overflow: hidden; }
.tree a { display: flex; align-items: center; gap: 5px; height: 24px; padding-left: 40px; white-space: nowrap; width: 139px; overflow: hidden; }
.tree a.root { padding-left: 32px; }
.tree a.picked { background: #d9d9d9; }
.vscroll { width: 16px; display: flex; flex-direction: column; align-items: center; padding: 4px 0 3px; background: #f0f0f0; color: #555; }
.vtrack { flex: 1; width: 15px; display: flex; flex-direction: column; padding-top: 96px; }
.vtrack i { height: 110px; background: #cdcdcd; }
.list { flex: 1; display: flex; flex-direction: column; justify-content: space-between; min-width: 0; margin-left: 4px; }
table { width: 100%; table-layout: fixed; border-collapse: separate; border-spacing: 0; }
.c-date { width: 144px; }
.c-type { width: 120px; }
.c-size { width: 80px; }
.c-rest { width: 8px; }
th { position: relative; height: 31px; padding: 0 6px 5px; text-align: left; font-weight: 400; color: #4c607a; background: linear-gradient(#e5e5e5, #e5e5e5) 100% 0 / 1px 25px no-repeat; }
th:first-child { padding-left: 17px; }
th:last-child { background: none; padding: 0; }
.sort { position: absolute; left: 137px; top: -2px; color: #777; }
td { height: 21px; padding: 0 6px; color: #6d6d6d; white-space: nowrap; overflow: hidden; }
td:first-child { color: #111; padding-left: 18px; }
td:last-child { padding: 0; }
td:nth-child(4) { text-align: right; padding-right: 8px; }
td svg { display: inline-block; vertical-align: -4px; margin-right: 4px; }
.hscroll { display: flex; align-items: center; justify-content: space-between; height: 16px; background: #f0f0f0; color: #555; padding: 0 3px; gap: 4px; }
.hscroll i { flex: 1; height: 15px; margin-right: 2px; background: #cdcdcd; }
.status { display: flex; align-items: center; height: 24px; padding: 0 4px 0 14px; color: #33405c; }
.status span { margin-right: auto; }
.view { width: 22px; height: 23px; }
.view.on { background: #cceefb; border: 1px solid #3399bd; }

/* driver booster */
.booster { position: absolute; left: 160px; top: 40px; width: 960px; height: 640px; display: flex; overflow: hidden; background: #232323; border: 1px solid #000; border-radius: 7px; box-shadow: 0 0 7px #0008; color: #4b4b4b; }
.booster-side { width: 139px; background: #111; }
.burger { flex-direction: column; gap: 4px; margin: 23px 0 0 57px; }
.burger i { width: 25px; height: 2px; background: #3c3c3c; }
.booster-main { position: relative; flex: 1; display: flex; flex-direction: column; }
.orb { position: absolute; left: 540px; top: 82px; width: 36px; height: 36px; border-radius: 50%; background: #2b2b2b; }
.booster-head { display: grid; grid-template-columns: 1fr auto 1fr; align-items: center; height: 35px; }
.booster-head h1 { grid-column: 2; display: flex; align-items: center; gap: 11px; font: 500 17px/20px Inter, sans-serif; color: #6b6b6b; }
.booster-head h1 span { border: 1px solid #c93445; border-radius: 1px; padding: 0 2px; font: 11px/13px Roboto, sans-serif; color: #e63b4d; }
.booster-buttons { display: flex; justify-self: end; }
.booster-buttons button { width: 34px; height: 34px; }
.booster-body { flex: 1; display: flex; align-items: flex-start; justify-content: flex-end; padding-top: 199px; }
.tools { width: 41px; height: 180px; padding: 7px 0 3px; display: flex; flex-direction: column; justify-content: space-around; align-items: center; background: #303030; border-radius: 18px 0 0 18px; color: #808080; }
.booster-foot { display: flex; justify-content: flex-end; gap: 8px; padding: 0 19px 14px; }
.booster-foot button { height: 32px; background: #2a2a2a; }
.booster-foot .key { width: 40px; color: #565656; }
.booster-foot .activate { width: 138px; background: #303030; font-size: 13px; color: #555; }

.watermark { position: absolute; right: 49px; bottom: 48px; display: flex; align-items: center; gap: 5px; color: #dddddd; font: 33px/62px Roboto, sans-serif; opacity: .75; text-shadow: 0 0 3px #9998; }

.taskbar { height: 40px; display: flex; background: linear-gradient(90deg, #00161e, #000d18 60%, #000514); color: #fff; }
.start { width: 48px; }
.task-search { width: 288px; display: flex; align-items: center; padding-left: 12px; background: #f1f1f1; }
.task-search input { flex: 1; margin-left: 10px; font-size: 14px; color: #333; }
.task-search input::placeholder { color: #444; opacity: 1; }
.flowers { align-self: flex-end; margin-left: -30px; }
.apps { display: flex; }
.apps button { width: 49px; border-bottom: 2px solid transparent; }
.apps button:nth-child(2) { width: 51px; }
.apps .current { width: 48px; background: #9a5a25; border-bottom-color: #ff7300; }
.apps .running { background: linear-gradient(#82b8e4, #82b8e4) 50% 100% / 40px 2px no-repeat; border: 0; }
.tray { display: flex; align-items: center; margin-left: auto; }
.tray button { width: 24px; }
.clock { display: flex; flex-direction: column; text-align: center; width: 64px; line-height: 18px; }
.tray .notes { width: 41px; }
.peek { width: 1px; height: 40px; background: #4b525c; margin: 0 4px 0 7px; }
```

FILE: script.js
```js
const template = document.getElementById('explorer');
document.querySelectorAll('.slot').forEach((slot) => {
  slot.append(template.content.cloneNode(true));
});
```
